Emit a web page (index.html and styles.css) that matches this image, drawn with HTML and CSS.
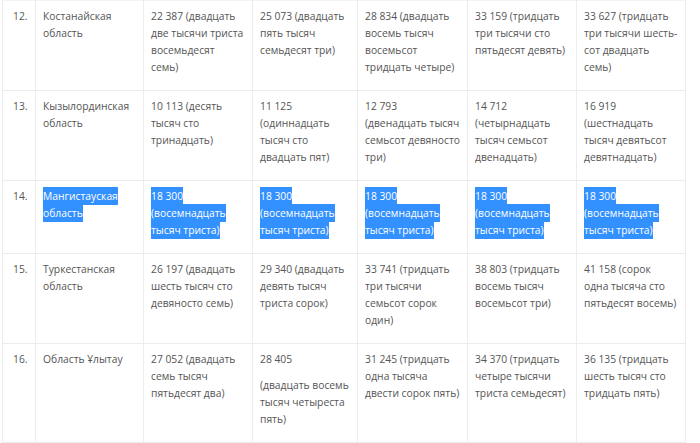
FILE: index.html
```html
<!DOCTYPE html>
<html lang="ru">
<head>
<meta charset="utf-8">
<title>Таблица</title>
<link rel="stylesheet" href="styles.css">
</head>
<body>
<table class="data">
  <colgroup>
    <col class="c-num"><col class="c-reg"><col class="c-a"><col class="c-b"><col class="c-c"><col class="c-d"><col class="c-e">
  </colgroup>
  <tbody>
    <tr>
      <td class="num">12.</td>
      <td>Костанайская<br>область</td>
      <td>22 387 (двадцать<br>две тысячи триста<br>восемьдесят<br>семь)</td>
      <td>25 073 (двадцать<br>пять тысяч<br>семьдесят три)</td>
      <td>28 834 (двадцать<br>восемь тысяч<br>восемьсот<br>тридцать четыре)</td>
      <td>33 159 (тридцать<br>три тысячи сто<br>пятьдесят девять)</td>
      <td>33 627 (тридцать<br>три тысячи шесть-<br>сот двадцать<br>семь)</td>
    </tr>
    <tr>
      <td class="num">13.</td>
      <td>Кызылординская<br>область</td>
      <td>10 113 (десять<br>тысяч сто<br>тринадцать)</td>
      <td>11 125<br>(одиннадцать<br>тысяч сто<br>двадцать пят)</td>
      <td>12 793<br>(двенадцать тысяч<br>семьсот девяносто<br>три)</td>
      <td>14 712<br>(четырнадцать<br>тысяч семьсот<br>двенадцать)</td>
      <td>16 919<br>(шестнадцать<br>тысяч девятьсот<br>девятнадцать)</td>
    </tr>
    <tr>
      <td class="num">14.</td>
      <td><span class="sel">Мангистауская<br>область</span></td>
      <td><span class="sel">18 300<br>(восемнадцать<br>тысяч триста)</span></td>
      <td><span class="sel">18 300<br>(восемнадцать<br>тысяч триста)</span></td>
      <td><span class="sel">18 300<br>(восемнадцать<br>тысяч триста)</span></td>
      <td><span class="sel">18 300<br>(восемнадцать<br>тысяч триста)</span></td>
      <td><span class="sel">18 300<br>(восемнадцать<br>тысяч триста)</span></td>
    </tr>
    <tr>
      <td class="num">15.</td>
      <td>Туркестанская<br>область</td>
      <td>26 197 (двадцать<br>шесть тысяч сто<br>девяносто семь)</td>
      <td>29 340 (двадцать<br>девять тысяч<br>триста сорок)</td>
      <td>33 741 (тридцать<br>три тысячи<br>семьсот сорок<br>один)</td>
      <td>38 803 (тридцать<br>восемь тысяч<br>восемьсот три)</td>
      <td>41 158 (сорок<br>одна тысяча сто<br>пятьдесят восемь)</td>
    </tr>
    <tr>
      <td class="num">16.</td>
      <td>Область Ұлытау</td>
      <td>27 052 (двадцать<br>семь тысяч<br>пятьдесят два)</td>
      <td><p class="lead">28 405</p><p class="rest">(двадцать восемь<br>тысяч четыреста<br>пять)</p></td>
      <td>31 245 (тридцать<br>одна тысяча<br>двести сорок пять)</td>
      <td>34 370 (тридцать<br>четыре тысячи<br>триста семьдесят)</td>
      <td>36 135 (тридцать<br>шесть тысяч сто<br>тридцать пять)</td>
    </tr>
  </tbody>
</table>
</body>
</html>
```

FILE: styles.css
```css
html, body {
  margin: 0;
  padding: 0;
  background: #ffffff;
}

body {
  font-family: "Open Sans", "Noto Sans", sans-serif;
  font-size: 10.3px;
  line-height: 17px;
  color: #555555;
}

.data {
  border-collapse: collapse;
  table-layout: fixed;
  width: 683px;
  margin-left: 2px;
}

.c-num { width: 33px; }
.c-reg { width: 108px; }
.c-a { width: 109px; }
.c-b { width: 105px; }
.c-c { width: 110px; }
.c-d { width: 109px; }
.c-e { width: 109px; }

.data td {
  border: 1px solid #ececec;
  vertical-align: top;
  padding: 7px 4px 14px 7px;
  white-space: nowrap;
}

.data tr:first-child td {
  border-top-color: #f3f3f3;
}

.data td.num {
  padding-left: 10px;
  padding-right: 2px;
}

.sel {
  background: #3390ff;
  color: #ffffff;
  padding: 2px 0;
}

.lead {
  margin: 0 0 9px 0;
}

.rest {
  margin: 0;
}
```
